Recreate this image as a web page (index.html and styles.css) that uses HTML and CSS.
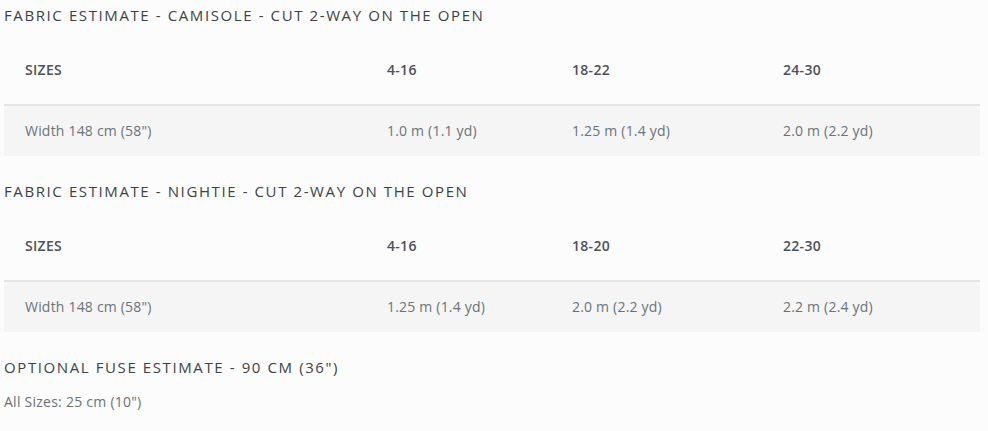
FILE: index.html
```html
<!DOCTYPE html>
<html lang="en">
<head>
<meta charset="utf-8">
<title>Fabric Estimates</title>
<link rel="stylesheet" href="styles.css">
</head>
<body>
<main class="page">
  <section class="block">
    <h2 class="title">Fabric Estimate - Camisole - Cut 2-Way on the Open</h2>
    <div class="table">
      <div class="row head">
        <div class="cell">Sizes</div>
        <div class="cell">4-16</div>
        <div class="cell">18-22</div>
        <div class="cell">24-30</div>
      </div>
      <div class="row data">
        <div class="cell">Width 148 cm (58")</div>
        <div class="cell">1.0 m (1.1 yd)</div>
        <div class="cell">1.25 m (1.4 yd)</div>
        <div class="cell">2.0 m (2.2 yd)</div>
      </div>
    </div>
  </section>
  <section class="block">
    <h2 class="title">Fabric Estimate - Nightie - Cut 2-Way on the Open</h2>
    <div class="table">
      <div class="row head">
        <div class="cell">Sizes</div>
        <div class="cell">4-16</div>
        <div class="cell">18-20</div>
        <div class="cell">22-30</div>
      </div>
      <div class="row data">
        <div class="cell">Width 148 cm (58")</div>
        <div class="cell">1.25 m (1.4 yd)</div>
        <div class="cell">2.0 m (2.2 yd)</div>
        <div class="cell">2.2 m (2.4 yd)</div>
      </div>
    </div>
  </section>
  <section class="block">
    <h2 class="title">Optional Fuse Estimate - 90 cm (36")</h2>
    <p class="note">All Sizes: 25 cm (10")</p>
  </section>
</main>
</body>
</html>
```

FILE: styles.css
```css
html, body {
  margin: 0;
  padding: 0;
  background: #fcfcfc;
}
.page {
  padding: 5px 8px 0 4px;
  font-family: "Open Sans", "DejaVu Sans", sans-serif;
  color: #69727b;
}
.title {
  margin: 0;
  font-family: "Open Sans", sans-serif;
  font-weight: 500;
  font-size: 15px;
  line-height: 21px;
  letter-spacing: 1.6px;
  text-transform: uppercase;
  color: #3d4246;
}
.table {
  margin-top: 10px;
  margin-bottom: 25px;
}
.row {
  display: grid;
  grid-template-columns: 362px 185px 211px 218px;
}
.row.head {
  height: 68px;
  align-items: center;
  border-bottom: 2px solid #e4e4e4;
  font-weight: 600;
  font-size: 14px;
  letter-spacing: 0.3px;
  color: #4d5258;
}
.row.head .cell:first-child {
  text-transform: uppercase;
}
.row.data {
  height: 50px;
  align-items: center;
  background: #f5f5f5;
  font-size: 14px;
  letter-spacing: 0.2px;
}
.cell {
  padding-left: 21px;
  padding-bottom: 2px;
}
.note {
  margin: 14px 0 0;
  font-size: 14px;
  letter-spacing: 0.25px;
  color: #69727b;
}
```
